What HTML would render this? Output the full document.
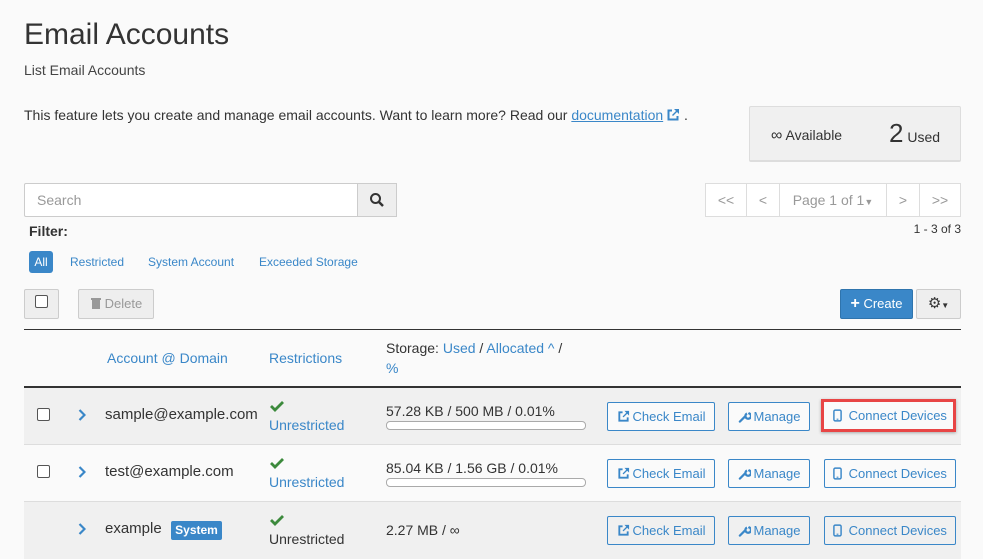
<!DOCTYPE html>
<html><head><style>
*{box-sizing:border-box;margin:0;padding:0}
body{width:983px;height:558px;overflow:hidden;background:#fafafa;font-family:"Liberation Sans",sans-serif;color:#333;position:relative;font-size:14px}
.a{position:absolute;white-space:nowrap}
.link{color:#3a87c8}
.btn{position:absolute;border:1px solid #3a87c8;border-radius:2px;color:#3a87c8;font-size:13px;height:29px;line-height:27px;text-align:center;background:#fafafa}
.btn svg{vertical-align:-2px;margin-right:3px}
.row{position:absolute;left:24px;width:937px;height:57px;border-bottom:1px solid #ddd}
.cb{position:absolute;width:13px;height:13px;border:1px solid #555;border-radius:2px;background:#fff}
.bar{position:absolute;width:200px;height:9px;border:1px solid #aaa;border-radius:4px;background:#fff}
.pg{position:absolute;top:183px;height:34px;border:1px solid #ddd;background:#fff;color:#999;font-size:14px;line-height:32px;text-align:center}
</style></head><body>
<svg width="0" height="0" style="position:absolute"><defs>
<symbol id="ext" viewBox="0 0 14 14"><path d="M6 2.5H2.5v9h9V8" fill="none" stroke="#3a87c8" stroke-width="2"/><path d="M8 1h5v5L11 4 7 8 6 7l4-4z" fill="#3a87c8"/></symbol>
<symbol id="wr" viewBox="0 0 14 14"><path d="M2 12.5l6-6M8 6.5a3 3 0 1 0 0-0.1" fill="none" stroke="#3a87c8" stroke-width="2.4" stroke-linecap="round"/><path d="M9 2l3 0-2 3" fill="#fafafa"/></symbol>
<symbol id="ph" viewBox="0 0 10 14"><rect x="1" y="1" width="8" height="12" rx="1.5" fill="none" stroke="#3a87c8" stroke-width="1.6"/><rect x="4" y="10.5" width="2" height="1.2" fill="#3a87c8"/></symbol>
<symbol id="ck" viewBox="0 0 14 12"><path d="M1 6l4 4 8-8" fill="none" stroke="#3c8a3c" stroke-width="2.8"/></symbol>
<symbol id="ch" viewBox="0 0 8 14"><path d="M1.5 2l5 5-5 5" fill="none" stroke="#3a87c8" stroke-width="2.2"/></symbol>
</defs></svg>
<div class="a" style="left:24px;top:18px;font-size:30px;color:#333">Email Accounts</div>
<div class="a" style="left:24px;top:62px;font-size:14px;color:#444">List Email Accounts</div>
<div class="a" style="left:24px;top:107px;font-size:14px">This feature lets you create and manage email accounts. Want to learn more? Read our <span class="link" style="text-decoration:underline">documentation</span><svg width="14" height="14" style="vertical-align:-2px;margin-left:3px"><use href="#ext"/></svg> .</div>
<div class="a" style="left:749px;top:106px;width:212px;height:56px;background:#f0f0f0;border:1px solid #ddd;border-bottom:2px solid #ddd;border-radius:2px"></div>
<div class="a" style="left:771px;top:127px;font-size:14px"><span style="font-size:16px">∞</span> Available</div>
<div class="a" style="left:889px;top:118px;font-size:14px"><span style="font-size:26px">2</span> Used</div>
<div class="a" style="left:24px;top:183px;width:334px;height:34px;border:1px solid #ccc;background:#fff;border-radius:2px 0 0 2px"></div>
<div class="a" style="left:37px;top:192px;color:#999">Search</div>
<div class="a" style="left:357px;top:183px;width:40px;height:34px;border:1px solid #ccc;background:#eee"></div>
<svg class="a" style="left:369px;top:192px" width="16" height="16" viewBox="0 0 16 16"><circle cx="6.5" cy="6.5" r="4.5" fill="none" stroke="#333" stroke-width="2"/><path d="M10 10l4 4" stroke="#333" stroke-width="2.5"/></svg>
<div class="pg" style="left:705px;width:42px">&lt;&lt;</div>
<div class="pg" style="left:746px;width:34px">&lt;</div>
<div class="pg" style="left:779px;width:108px">Page 1 of 1<span style="font-size:9px">▼</span></div>
<div class="pg" style="left:886px;width:34px">&gt;</div>
<div class="pg" style="left:919px;width:42px">&gt;&gt;</div>
<div class="a" style="left:29px;top:223px;font-weight:bold;font-size:14px">Filter:</div>
<div class="a" style="right:22px;top:222px;font-size:12px">1 - 3 of 3</div>
<div class="a" style="left:29px;top:251px;width:24px;height:22px;background:#3a87c8;color:#fff;border-radius:3px;font-size:12px;line-height:22px;text-align:center">All</div>
<div class="a link" style="left:70px;top:255px;font-size:12px">Restricted</div>
<div class="a link" style="left:148px;top:255px;font-size:12px">System Account</div>
<div class="a link" style="left:259px;top:255px;font-size:12px">Exceeded Storage</div>
<div class="a" style="left:24px;top:289px;width:35px;height:30px;border:1px solid #ccc;background:#eee;border-radius:2px"></div>
<div class="cb" style="left:35px;top:295px"></div>
<div class="a" style="left:78px;top:289px;width:76px;height:30px;border:1px solid #ccc;background:#eee;border-radius:2px;color:#999;font-size:13px;line-height:28px;padding-left:12px"><svg width="10" height="12" viewBox="0 0 10 12" style="vertical-align:-1px"><rect x="0" y="1" width="10" height="2" fill="#999"/><rect x="1" y="3" width="8" height="9" fill="#999"/></svg> Delete</div>
<div class="a" style="left:840px;top:289px;width:73px;height:30px;background:#3a87c8;border:1px solid #2f74ad;border-radius:2px;color:#fff;font-size:13px;line-height:28px;text-align:center"><b style="font-size:16px">+</b> Create</div>
<div class="a" style="left:916px;top:289px;width:45px;height:30px;background:#eee;border:1px solid #ccc;border-radius:2px;font-size:15px;line-height:28px;text-align:center">⚙<span style="font-size:8px">▼</span></div>
<div class="a" style="left:24px;top:329px;width:937px;height:1px;background:#333"></div>
<div class="a link" style="left:107px;top:350px">Account @ Domain</div>
<div class="a link" style="left:269px;top:350px">Restrictions</div>
<div class="a" style="left:386px;top:340px">Storage: <span class="link">Used</span> / <span class="link">Allocated ^</span> /</div>
<div class="a link" style="left:386px;top:360px">%</div>
<div class="a" style="left:24px;top:386px;width:937px;height:2px;background:#333"></div>

<div class="row" style="top:388px;background:#f0f0f0"></div>
<div class="row" style="top:445px;background:#fafafa"></div>
<div class="row" style="top:502px;background:#f0f0f0;border:none"></div>

<div class="cb" style="left:37px;top:408px"></div>
<div class="cb" style="left:37px;top:465px"></div>
<svg class="a" style="left:78px;top:408px" width="8" height="14"><use href="#ch"/></svg>
<svg class="a" style="left:78px;top:465px" width="8" height="14"><use href="#ch"/></svg>
<svg class="a" style="left:78px;top:522px" width="8" height="14"><use href="#ch"/></svg>
<div class="a" style="left:105px;top:406px;font-size:15px">sample@example.com</div>
<div class="a" style="left:105px;top:463px;font-size:15px">test@example.com</div>
<div class="a" style="left:105px;top:520px;font-size:15px">example</div>
<div class="a" style="left:171px;top:521px;width:51px;height:19px;background:#3a87c8;color:#fff;border-radius:2px;font-size:12px;font-weight:bold;line-height:19px;text-align:center">System</div>

<svg class="a" style="left:270px;top:400px" width="14" height="12"><use href="#ck"/></svg>
<div class="a link" style="left:269px;top:417px;font-size:14px">Unrestricted</div>
<svg class="a" style="left:270px;top:457px" width="14" height="12"><use href="#ck"/></svg>
<div class="a link" style="left:269px;top:474px;font-size:14px">Unrestricted</div>
<svg class="a" style="left:270px;top:514px" width="14" height="12"><use href="#ck"/></svg>
<div class="a" style="left:269px;top:531px;font-size:14px">Unrestricted</div>

<div class="a" style="left:386px;top:403px;font-size:14px">57.28 KB / 500 MB / 0.01%</div>
<div class="bar" style="left:386px;top:421px"></div>
<div class="a" style="left:386px;top:460px;font-size:14px">85.04 KB / 1.56 GB / 0.01%</div>
<div class="bar" style="left:386px;top:478px"></div>
<div class="a" style="left:386px;top:522px;font-size:14px">2.27 MB / ∞</div>

<div class="btn" style="left:607px;top:402px;width:108px"><svg width="13" height="13"><use href="#ext"/></svg>Check Email</div>
<div class="btn" style="left:728px;top:402px;width:82px"><svg width="13" height="13"><use href="#wr"/></svg>Manage</div>
<div class="btn" style="left:824px;top:402px;width:132px;border:none"><svg width="9" height="13"><use href="#ph"/></svg> Connect Devices</div>
<div class="a" style="left:821px;top:399px;width:135px;height:33px;border:3px solid #e84545;box-shadow:0 1px 3px rgba(0,0,0,.3)"></div>
<div class="btn" style="left:607px;top:459px;width:108px"><svg width="13" height="13"><use href="#ext"/></svg>Check Email</div>
<div class="btn" style="left:728px;top:459px;width:82px"><svg width="13" height="13"><use href="#wr"/></svg>Manage</div>
<div class="btn" style="left:824px;top:459px;width:132px"><svg width="9" height="13"><use href="#ph"/></svg> Connect Devices</div>
<div class="btn" style="left:607px;top:516px;width:108px;background:#f0f0f0"><svg width="13" height="13"><use href="#ext"/></svg>Check Email</div>
<div class="btn" style="left:728px;top:516px;width:82px;background:#f0f0f0"><svg width="13" height="13"><use href="#wr"/></svg>Manage</div>
<div class="btn" style="left:824px;top:516px;width:132px;background:#f0f0f0"><svg width="9" height="13"><use href="#ph"/></svg> Connect Devices</div>
</body></html>
